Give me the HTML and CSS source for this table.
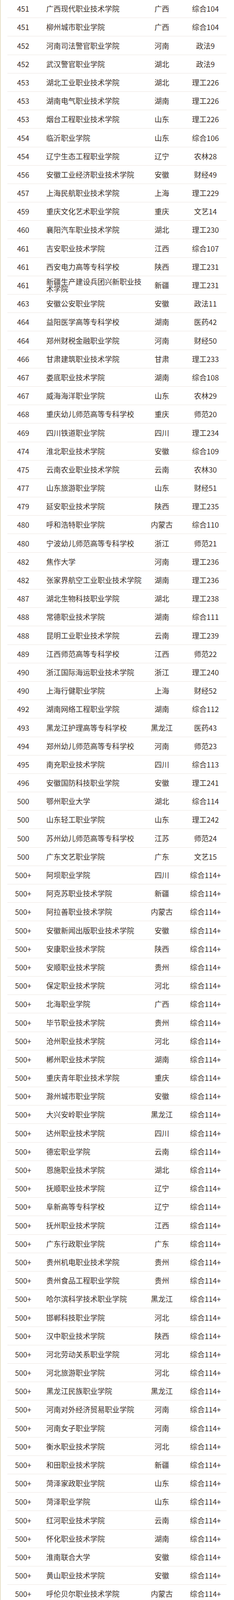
FILE: index.html
```html
<!DOCTYPE html>
<html lang="zh-CN">
<head>
<meta charset="utf-8">
<title>高职院校排名</title>
<link rel="stylesheet" href="styles.css">
</head>
<body>
<div class="page">
  <div class="table">
    <div class="row"><span class="rank">451</span><span class="name">广西现代职业技术学院</span><span class="prov">广西</span><span class="type">综合104</span></div>
    <div class="row"><span class="rank">451</span><span class="name">柳州城市职业学院</span><span class="prov">广西</span><span class="type">综合104</span></div>
    <div class="row"><span class="rank">452</span><span class="name">河南司法警官职业学院</span><span class="prov">河南</span><span class="type">政法9</span></div>
    <div class="row"><span class="rank">452</span><span class="name">武汉警官职业学院</span><span class="prov">湖北</span><span class="type">政法9</span></div>
    <div class="row"><span class="rank">453</span><span class="name">湖北工业职业技术学院</span><span class="prov">湖北</span><span class="type">理工226</span></div>
    <div class="row"><span class="rank">453</span><span class="name">湖南电气职业技术学院</span><span class="prov">湖南</span><span class="type">理工226</span></div>
    <div class="row"><span class="rank">453</span><span class="name">烟台工程职业技术学院</span><span class="prov">山东</span><span class="type">理工226</span></div>
    <div class="row"><span class="rank">454</span><span class="name">临沂职业学院</span><span class="prov">山东</span><span class="type">综合106</span></div>
    <div class="row"><span class="rank">454</span><span class="name">辽宁生态工程职业学院</span><span class="prov">辽宁</span><span class="type">农林28</span></div>
    <div class="row"><span class="rank">456</span><span class="name">安徽工业经济职业技术学院</span><span class="prov">安徽</span><span class="type">财经49</span></div>
    <div class="row"><span class="rank">457</span><span class="name">上海民航职业技术学院</span><span class="prov">上海</span><span class="type">理工229</span></div>
    <div class="row"><span class="rank">459</span><span class="name">重庆文化艺术职业学院</span><span class="prov">重庆</span><span class="type">文艺14</span></div>
    <div class="row"><span class="rank">460</span><span class="name">襄阳汽车职业技术学院</span><span class="prov">湖北</span><span class="type">理工230</span></div>
    <div class="row"><span class="rank">461</span><span class="name">吉安职业技术学院</span><span class="prov">江西</span><span class="type">综合107</span></div>
    <div class="row"><span class="rank">461</span><span class="name">西安电力高等专科学校</span><span class="prov">陕西</span><span class="type">理工231</span></div>
    <div class="row"><span class="rank">461</span><span class="name">新疆生产建设兵团兴新职业技术学院</span><span class="prov">新疆</span><span class="type">理工231</span></div>
    <div class="row"><span class="rank">463</span><span class="name">安徽公安职业学院</span><span class="prov">安徽</span><span class="type">政法11</span></div>
    <div class="row"><span class="rank">464</span><span class="name">益阳医学高等专科学校</span><span class="prov">湖南</span><span class="type">医药42</span></div>
    <div class="row"><span class="rank">464</span><span class="name">郑州财税金融职业学院</span><span class="prov">河南</span><span class="type">财经50</span></div>
    <div class="row"><span class="rank">466</span><span class="name">甘肃建筑职业技术学院</span><span class="prov">甘肃</span><span class="type">理工233</span></div>
    <div class="row"><span class="rank">467</span><span class="name">娄底职业技术学院</span><span class="prov">湖南</span><span class="type">综合108</span></div>
    <div class="row"><span class="rank">467</span><span class="name">威海海洋职业学院</span><span class="prov">山东</span><span class="type">农林29</span></div>
    <div class="row"><span class="rank">468</span><span class="name">重庆幼儿师范高等专科学校</span><span class="prov">重庆</span><span class="type">师范20</span></div>
    <div class="row"><span class="rank">469</span><span class="name">四川铁道职业学院</span><span class="prov">四川</span><span class="type">理工234</span></div>
    <div class="row"><span class="rank">474</span><span class="name">淮北职业技术学院</span><span class="prov">安徽</span><span class="type">综合109</span></div>
    <div class="row"><span class="rank">475</span><span class="name">云南农业职业技术学院</span><span class="prov">云南</span><span class="type">农林30</span></div>
    <div class="row"><span class="rank">477</span><span class="name">山东旅游职业学院</span><span class="prov">山东</span><span class="type">财经51</span></div>
    <div class="row"><span class="rank">479</span><span class="name">延安职业技术学院</span><span class="prov">陕西</span><span class="type">理工235</span></div>
    <div class="row"><span class="rank">480</span><span class="name">呼和浩特职业学院</span><span class="prov">内蒙古</span><span class="type">综合110</span></div>
    <div class="row"><span class="rank">480</span><span class="name">宁波幼儿师范高等专科学校</span><span class="prov">浙江</span><span class="type">师范21</span></div>
    <div class="row"><span class="rank">482</span><span class="name">焦作大学</span><span class="prov">河南</span><span class="type">理工236</span></div>
    <div class="row"><span class="rank">482</span><span class="name">张家界航空工业职业技术学院</span><span class="prov">湖南</span><span class="type">理工236</span></div>
    <div class="row"><span class="rank">487</span><span class="name">湖北生物科技职业学院</span><span class="prov">湖北</span><span class="type">理工238</span></div>
    <div class="row"><span class="rank">488</span><span class="name">常德职业技术学院</span><span class="prov">湖南</span><span class="type">综合111</span></div>
    <div class="row"><span class="rank">488</span><span class="name">昆明工业职业技术学院</span><span class="prov">云南</span><span class="type">理工239</span></div>
    <div class="row"><span class="rank">489</span><span class="name">江西师范高等专科学校</span><span class="prov">江西</span><span class="type">师范22</span></div>
    <div class="row"><span class="rank">490</span><span class="name">浙江国际海运职业技术学院</span><span class="prov">浙江</span><span class="type">理工240</span></div>
    <div class="row"><span class="rank">490</span><span class="name">上海行健职业学院</span><span class="prov">上海</span><span class="type">财经52</span></div>
    <div class="row"><span class="rank">492</span><span class="name">湖南网络工程职业学院</span><span class="prov">湖南</span><span class="type">综合112</span></div>
    <div class="row"><span class="rank">493</span><span class="name">黑龙江护理高等专科学校</span><span class="prov">黑龙江</span><span class="type">医药43</span></div>
    <div class="row"><span class="rank">494</span><span class="name">郑州幼儿师范高等专科学校</span><span class="prov">河南</span><span class="type">师范23</span></div>
    <div class="row"><span class="rank">495</span><span class="name">南充职业技术学院</span><span class="prov">四川</span><span class="type">综合113</span></div>
    <div class="row"><span class="rank">496</span><span class="name">安徽国防科技职业学院</span><span class="prov">安徽</span><span class="type">理工241</span></div>
    <div class="row"><span class="rank">500</span><span class="name">鄂州职业大学</span><span class="prov">湖北</span><span class="type">综合114</span></div>
    <div class="row"><span class="rank">500</span><span class="name">山东轻工职业学院</span><span class="prov">山东</span><span class="type">理工242</span></div>
    <div class="row"><span class="rank">500</span><span class="name">苏州幼儿师范高等专科学校</span><span class="prov">江苏</span><span class="type">师范24</span></div>
    <div class="row"><span class="rank">500</span><span class="name">广东文艺职业学院</span><span class="prov">广东</span><span class="type">文艺15</span></div>
    <div class="row"><span class="rank">500+</span><span class="name">阿坝职业学院</span><span class="prov">四川</span><span class="type">综合114+</span></div>
    <div class="row"><span class="rank">500+</span><span class="name">阿克苏职业技术学院</span><span class="prov">新疆</span><span class="type">综合114+</span></div>
    <div class="row"><span class="rank">500+</span><span class="name">阿拉善职业技术学院</span><span class="prov">内蒙古</span><span class="type">综合114+</span></div>
    <div class="row"><span class="rank">500+</span><span class="name">安徽新闻出版职业技术学院</span><span class="prov">安徽</span><span class="type">综合114+</span></div>
    <div class="row"><span class="rank">500+</span><span class="name">安康职业技术学院</span><span class="prov">陕西</span><span class="type">综合114+</span></div>
    <div class="row"><span class="rank">500+</span><span class="name">安顺职业技术学院</span><span class="prov">贵州</span><span class="type">综合114+</span></div>
    <div class="row"><span class="rank">500+</span><span class="name">保定职业技术学院</span><span class="prov">河北</span><span class="type">综合114+</span></div>
    <div class="row"><span class="rank">500+</span><span class="name">北海职业学院</span><span class="prov">广西</span><span class="type">综合114+</span></div>
    <div class="row"><span class="rank">500+</span><span class="name">毕节职业技术学院</span><span class="prov">贵州</span><span class="type">综合114+</span></div>
    <div class="row"><span class="rank">500+</span><span class="name">沧州职业技术学院</span><span class="prov">河北</span><span class="type">综合114+</span></div>
    <div class="row"><span class="rank">500+</span><span class="name">郴州职业技术学院</span><span class="prov">湖南</span><span class="type">综合114+</span></div>
    <div class="row"><span class="rank">500+</span><span class="name">重庆青年职业技术学院</span><span class="prov">重庆</span><span class="type">综合114+</span></div>
    <div class="row"><span class="rank">500+</span><span class="name">滁州城市职业学院</span><span class="prov">安徽</span><span class="type">综合114+</span></div>
    <div class="row"><span class="rank">500+</span><span class="name">大兴安岭职业学院</span><span class="prov">黑龙江</span><span class="type">综合114+</span></div>
    <div class="row"><span class="rank">500+</span><span class="name">达州职业技术学院</span><span class="prov">四川</span><span class="type">综合114+</span></div>
    <div class="row"><span class="rank">500+</span><span class="name">德宏职业学院</span><span class="prov">云南</span><span class="type">综合114+</span></div>
    <div class="row"><span class="rank">500+</span><span class="name">恩施职业技术学院</span><span class="prov">湖北</span><span class="type">综合114+</span></div>
    <div class="row"><span class="rank">500+</span><span class="name">抚顺职业技术学院</span><span class="prov">辽宁</span><span class="type">综合114+</span></div>
    <div class="row"><span class="rank">500+</span><span class="name">阜新高等专科学校</span><span class="prov">辽宁</span><span class="type">综合114+</span></div>
    <div class="row"><span class="rank">500+</span><span class="name">抚州职业技术学院</span><span class="prov">江西</span><span class="type">综合114+</span></div>
    <div class="row"><span class="rank">500+</span><span class="name">广东行政职业学院</span><span class="prov">广东</span><span class="type">综合114+</span></div>
    <div class="row"><span class="rank">500+</span><span class="name">贵州机电职业技术学院</span><span class="prov">贵州</span><span class="type">综合114+</span></div>
    <div class="row"><span class="rank">500+</span><span class="name">贵州食品工程职业学院</span><span class="prov">贵州</span><span class="type">综合114+</span></div>
    <div class="row"><span class="rank">500+</span><span class="name">哈尔滨科学技术职业学院</span><span class="prov">黑龙江</span><span class="type">综合114+</span></div>
    <div class="row"><span class="rank">500+</span><span class="name">邯郸科技职业学院</span><span class="prov">河北</span><span class="type">综合114+</span></div>
    <div class="row"><span class="rank">500+</span><span class="name">汉中职业技术学院</span><span class="prov">陕西</span><span class="type">综合114+</span></div>
    <div class="row"><span class="rank">500+</span><span class="name">河北劳动关系职业学院</span><span class="prov">河北</span><span class="type">综合114+</span></div>
    <div class="row"><span class="rank">500+</span><span class="name">河北旅游职业学院</span><span class="prov">河北</span><span class="type">综合114+</span></div>
    <div class="row"><span class="rank">500+</span><span class="name">黑龙江民族职业学院</span><span class="prov">黑龙江</span><span class="type">综合114+</span></div>
    <div class="row"><span class="rank">500+</span><span class="name">河南对外经济贸易职业学院</span><span class="prov">河南</span><span class="type">综合114+</span></div>
    <div class="row"><span class="rank">500+</span><span class="name">河南女子职业学院</span><span class="prov">河南</span><span class="type">综合114+</span></div>
    <div class="row"><span class="rank">500+</span><span class="name">衡水职业技术学院</span><span class="prov">河北</span><span class="type">综合114+</span></div>
    <div class="row"><span class="rank">500+</span><span class="name">和田职业技术学院</span><span class="prov">新疆</span><span class="type">综合114+</span></div>
    <div class="row"><span class="rank">500+</span><span class="name">菏泽家政职业学院</span><span class="prov">山东</span><span class="type">综合114+</span></div>
    <div class="row"><span class="rank">500+</span><span class="name">菏泽职业学院</span><span class="prov">山东</span><span class="type">综合114+</span></div>
    <div class="row"><span class="rank">500+</span><span class="name">红河职业技术学院</span><span class="prov">云南</span><span class="type">综合114+</span></div>
    <div class="row"><span class="rank">500+</span><span class="name">怀化职业技术学院</span><span class="prov">湖南</span><span class="type">综合114+</span></div>
    <div class="row"><span class="rank">500+</span><span class="name">淮南联合大学</span><span class="prov">安徽</span><span class="type">综合114+</span></div>
    <div class="row"><span class="rank">500+</span><span class="name">黄山职业技术学院</span><span class="prov">安徽</span><span class="type">综合114+</span></div>
    <div class="row"><span class="rank">500+</span><span class="name">呼伦贝尔职业技术学院</span><span class="prov">内蒙古</span><span class="type">综合114+</span></div>
    <div class="row"><span class="rank">500+</span><span class="name">湖南劳动人事职业学院</span><span class="prov">湖南</span><span class="type">综合114+</span></div>
    <div class="row"><span class="rank">500+</span><span class="name">佳木斯职业学院</span><span class="prov">黑龙江</span><span class="type">综合114+</span></div>
    <div class="row"><span class="rank">500+</span><span class="name">江西工程职业学院</span><span class="prov">江西</span><span class="type">综合114+</span></div>
    <div class="row"><span class="rank">500+</span><span class="name">江西青年职业学院</span><span class="prov">江西</span><span class="type">综合114+</span></div>
    <div class="row"><span class="rank">500+</span><span class="name">江西婺源茶业职业学院</span><span class="prov">江西</span><span class="type">综合114+</span></div>
    <div class="row"><span class="rank">500+</span><span class="name">揭阳职业技术学院</span><span class="prov">广东</span><span class="type">综合114+</span></div>
    <div class="row"><span class="rank">500+</span><span class="name">荆门职业学院</span><span class="prov">湖北</span><span class="type">综合114+</span></div>
    <div class="row"><span class="rank">500+</span><span class="name">晋中职业技术学院</span><span class="prov">山西</span><span class="type">综合114+</span></div>
    <div class="row"><span class="rank">500+</span><span class="name">冀中职业学院</span><span class="prov">河北</span><span class="type">综合114+</span></div>
    <div class="row"><span class="rank">500+</span><span class="name">喀什职业技术学院</span><span class="prov">新疆</span><span class="type">综合114+</span></div>
    <div class="row"><span class="rank">500+</span><span class="name">克孜勒苏职业技术学院</span><span class="prov">新疆</span><span class="type">综合114+</span></div>
    <div class="row"><span class="rank">500+</span><span class="name">兰考三农职业学院</span><span class="prov">河南</span><span class="type">综合114+</span></div>
    <div class="row"><span class="rank">500+</span><span class="name">兰州现代职业学院</span><span class="prov">甘肃</span><span class="type">综合114+</span></div>
    <div class="row"><span class="rank">500+</span><span class="name">辽阳职业技术学院</span><span class="prov">辽宁</span><span class="type">综合114+</span></div>
    <div class="row"><span class="rank">500+</span><span class="name">临汾职业技术学院</span><span class="prov">山西</span><span class="type">综合114+</span></div>
    <div class="row"><span class="rank">500+</span><span class="name">临夏现代职业学院</span><span class="prov">甘肃</span><span class="type">综合114+</span></div>
    <div class="row"><span class="rank">500+</span><span class="name">临沂科技职业学院</span><span class="prov">山东</span><span class="type">综合114+</span></div>
    <div class="row"><span class="rank">500+</span><span class="name">六盘水职业技术学院</span><span class="prov">贵州</span><span class="type">综合114+</span></div>
    <div class="row"><span class="rank">500+</span><span class="name">罗定职业技术学院</span><span class="prov">广东</span><span class="type">综合114+</span></div>
    <div class="row"><span class="rank">500+</span><span class="name">漯河职业技术学院</span><span class="prov">河南</span><span class="type">综合114+</span></div>
    <div class="row"><span class="rank">500+</span><span class="name">满洲里俄语职业学院</span><span class="prov">内蒙古</span><span class="type">综合114+</span></div>
    <div class="row"><span class="rank">500+</span><span class="name">眉山职业技术学院</span><span class="prov">四川</span><span class="type">综合114+</span></div>
    <div class="row"><span class="rank">500+</span><span class="name">闽北职业技术学院</span><span class="prov">福建</span><span class="type">综合114+</span></div>
    <div class="row"><span class="rank">500+</span><span class="name">牡丹江大学</span><span class="prov">黑龙江</span><span class="type">综合114+</span></div>
    <div class="row"><span class="rank">500+</span><span class="name">南京城市职业学院</span><span class="prov">江苏</span><span class="type">综合114+</span></div>
    <div class="row"><span class="rank">500+</span><span class="name">内江职业技术学院</span><span class="prov">四川</span><span class="type">综合114+</span></div>
    <div class="row"><span class="rank">500+</span><span class="name">宁德职业技术学院</span><span class="prov">福建</span><span class="type">综合114+</span></div>
    <div class="row"><span class="rank">500+</span><span class="name">盘锦职业技术学院</span><span class="prov">辽宁</span><span class="type">综合114+</span></div>
  </div>
  <div class="note">
    <p class="note-text">* 排名或排名区间相同的院校按综合、理工、师范、农林、医药、财经、政法、体育、文艺的顺序排列</p>
    <div class="note-line"></div>
  </div>
</div>
</body>
</html>
```

FILE: styles.css
```css
html, body {
  margin: 0;
  padding: 0;
  background: #ffffff;
}

body {
  font-family: "Noto Sans CJK SC", "Noto Sans", sans-serif;
  color: #3b302a;
}

.page {
  border-left: 2px solid #e7e1ca;
  min-height: 5479px;
  box-sizing: border-box;
  display: flex;
  flex-direction: column;
}

.table {
  margin: -1px 19.5px 0 17px;
}

.row {
  display: grid;
  grid-template-columns: 80.6px 271.4px 88px 1fr;
  align-items: center;
  height: 47.2px;
  padding-top: 1px;
  box-sizing: border-box;
  border-bottom: 1.5px solid #ece6e1;
  font-size: 18.8px;
  line-height: 1;
}

.row:last-child {
  border-bottom: none;
}

.rank {
  text-align: center;
}

.name {
  padding-left: 19px;
}

.prov {
  text-align: center;
  white-space: nowrap;
}

.type {
  text-align: center;
  padding-left: 14px;
  white-space: nowrap;
}

.note {
  flex: 1;
  background: #fdf9f2;
  padding: 14px 13.4px 0 11.4px;
}

.note-text {
  margin: 0;
  font-size: 12.8px;
  line-height: 18px;
  color: #b4aba3;
  white-space: nowrap;
}

.note-line {
  height: 2.5px;
  background: #f6c8a7;
  margin-top: 7px;
}
```
